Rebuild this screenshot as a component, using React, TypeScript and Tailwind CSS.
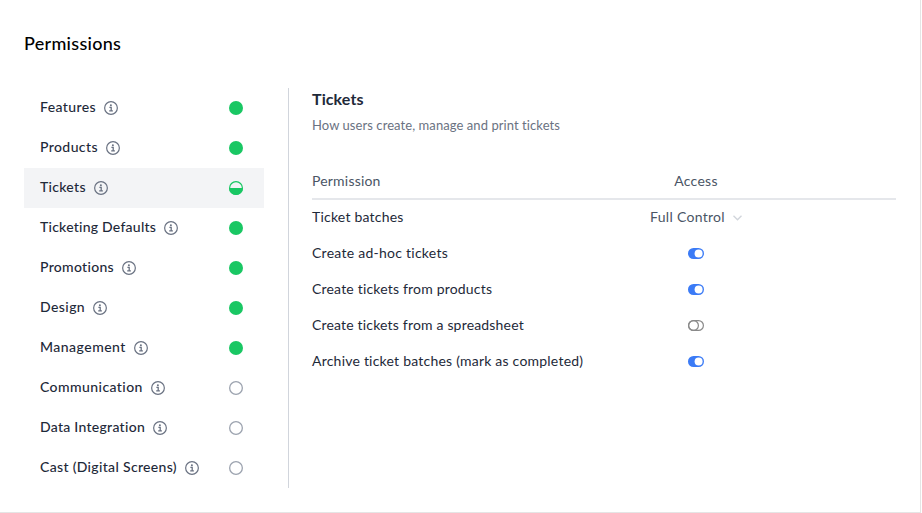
type Level = "full" | "partial" | "none";

type Category = { label: string; level: Level; tracking: string };

const categories: Category[] = [
  { label: "Features", level: "full", tracking: "tracking-[0.4px]" },
  { label: "Products", level: "full", tracking: "tracking-[0.4px]" },
  { label: "Tickets", level: "partial", tracking: "tracking-[0.3px]" },
  { label: "Ticketing Defaults", level: "full", tracking: "tracking-[0.24px]" },
  { label: "Promotions", level: "full", tracking: "tracking-[0.3px]" },
  { label: "Design", level: "full", tracking: "tracking-[0.42px]" },
  { label: "Management", level: "full", tracking: "tracking-[0.48px]" },
  { label: "Communication", level: "none", tracking: "tracking-[0.43px]" },
  { label: "Data Integration", level: "none", tracking: "tracking-[0.28px]" },
  { label: "Cast (Digital Screens)", level: "none", tracking: "tracking-[0.33px]" },
];

const permissions = [
  { label: "Create ad-hoc tickets", on: true, tracking: "tracking-[0.26px]" },
  { label: "Create tickets from products", on: true, tracking: "tracking-[0.19px]" },
  { label: "Create tickets from a spreadsheet", on: false, tracking: "tracking-[0.18px]" },
  { label: "Archive ticket batches (mark as completed)", on: true, tracking: "tracking-[0.22px]" },
];

function InfoIcon() {
  return (
    <svg className="size-3.5 shrink-0 text-gray-500" viewBox="0 0 14 14" fill="none">
      <circle cx="7" cy="7" r="6.35" stroke="currentColor" strokeWidth="1.2" />
      <circle cx="6.9" cy="4.2" r="1" fill="currentColor" />
      <path d="M5.4 6.3H7.2V9.9M5.2 9.9H8.9" stroke="currentColor" strokeWidth="1.3" />
    </svg>
  );
}

function StatusDot({ level }: { level: Level }) {
  return (
    <svg className="size-3.5 shrink-0" viewBox="0 0 14 14" fill="none">
      {level === "full" && <circle cx="7" cy="7" r="7" fill="#19c763" />}
      {level === "partial" && (
        <>
          <circle cx="7" cy="7" r="6.4" stroke="#19c763" strokeWidth="1.2" />
          <path d="M0 7H14A7 7 0 0 1 0 7Z" fill="#19c763" />
        </>
      )}
      {level === "none" && <circle cx="7" cy="7" r="6.35" stroke="#9ca3af" strokeWidth="1.3" />}
    </svg>
  );
}

function Toggle({ on }: { on: boolean }) {
  return (
    <svg className="mb-px h-[11px] w-4" viewBox="0 0 16 11" fill="none" role="switch" aria-checked={on}>
      {on ? (
        <>
          <rect width="16" height="11" rx="5.5" fill="#3b7bf6" />
          <circle cx="10.6" cy="5.5" r="4" fill="white" />
        </>
      ) : (
        <>
          <rect x="0.6" y="0.6" width="14.8" height="9.8" rx="4.9" stroke="#8a8a8a" strokeWidth="1.2" />
          <circle cx="5.5" cy="5.5" r="4.9" stroke="#8a8a8a" strokeWidth="1.2" />
        </>
      )}
    </svg>
  );
}

export default function App() {
  return (
    <div className="h-[513px] w-[922px] bg-white pr-px font-['Lato',sans-serif] text-sm text-gray-800">
      <div className="h-full border-r border-b border-[#e5e5e5] px-6 pt-[31px]">
        <h1 className="h-6 text-[18px] leading-6 font-medium tracking-[0.29px] text-black">Permissions</h1>
        <div className="mt-[33px] flex h-[400px]">
          <nav className="w-60 shrink-0">
            {categories.map((c) => (
              <div
                key={c.label}
                className={`flex h-10 items-center justify-between pr-[21px] pl-4 ${c.level === "partial" ? "bg-gray-100" : ""}`}
              >
                <div className="flex items-center gap-2">
                  <span className={`pb-0.5 font-medium whitespace-nowrap ${c.tracking}`}>{c.label}</span>
                  <InfoIcon />
                </div>
                <StatusDot level={c.level} />
              </div>
            ))}
          </nav>
          <main className="ml-6 flex-1 border-l border-gray-300 pl-[23px]">
            <h2 className="h-[23px] text-base leading-[22px] font-bold tracking-[0.1px]">Tickets</h2>
            <p className="mt-1 text-[13px] leading-5 tracking-[0.07px] text-gray-500">
              How users create, manage and print tickets
            </p>
            <div className="mt-9 grid h-[29px] grid-cols-[288px_192px] border-b-2 border-gray-200 leading-5 text-gray-600">
              <span className="tracking-[0.2px]">Permission</span>
              <span className="text-center tracking-[0.3px]">Access</span>
            </div>
            <div className="grid h-9 grid-cols-[288px_192px] items-center">
              <span className="pb-0.5 tracking-[0.22px]">Ticket batches</span>
              <div className="flex items-center justify-center gap-2 text-gray-600">
                <span className="pb-0.5 tracking-[0.3px]">Full Control</span>
                <svg className="h-1.5 w-[9px]" viewBox="0 0 9 6" fill="none">
                  <path d="M0.5 0.7L4.5 4.8L8.5 0.7" stroke="#d1d5db" strokeWidth="1.3" />
                </svg>
              </div>
            </div>
            {permissions.map((p) => (
              <div key={p.label} className="grid h-9 grid-cols-[288px_192px] items-center">
                <span className={`pb-0.5 whitespace-nowrap ${p.tracking}`}>{p.label}</span>
                <div className="flex justify-center">
                  <Toggle on={p.on} />
                </div>
              </div>
            ))}
          </main>
        </div>
      </div>
    </div>
  );
}
